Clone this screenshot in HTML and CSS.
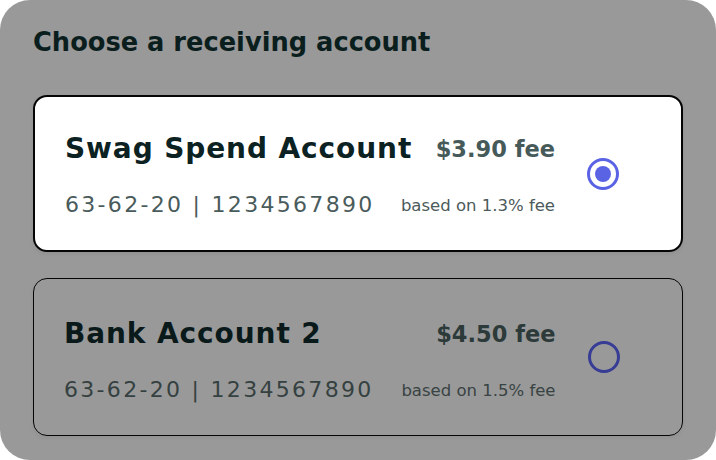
FILE: index.html
```html
<!DOCTYPE html>
<html lang="en">
<head>
<meta charset="utf-8">
<title>Choose a receiving account</title>
<link rel="stylesheet" href="styles.css">
</head>
<body>
<div class="panel">
  <h1 class="heading">Choose a receiving account</h1>
  <div class="cards">
    <label class="card card--selected">
      <span class="info">
        <span class="name">Swag Spend Account</span>
        <span class="numbers">63-62-20 | 1234567890</span>
      </span>
      <span class="pricing">
        <span class="fee">$3.90 fee</span>
        <span class="basis">based on 1.3% fee</span>
      </span>
      <span class="radio radio--on"><span class="dot"></span></span>
    </label>
    <label class="card card--dim">
      <span class="info">
        <span class="name">Bank Account 2</span>
        <span class="numbers">63-62-20 | 1234567890</span>
      </span>
      <span class="pricing">
        <span class="fee">$4.50 fee</span>
        <span class="basis">based on 1.5% fee</span>
      </span>
      <span class="radio"></span>
    </label>
  </div>
</div>
</body>
</html>
```
FILE: styles.css
```css
* { box-sizing: border-box; }
html, body { margin: 0; padding: 0; background: #ffffff; }
body { font-family: "DejaVu Sans", "Inter", sans-serif; }

.panel {
  width: 716px;
  height: 460px;
  background: #999999;
  border-radius: 30px;
  padding: 27px 33px 0 33px;
}

.heading {
  margin: 0;
  font-size: 25.7px;
  line-height: 30px;
  font-weight: 700;
  color: #0b1e1e;
}

.cards {
  margin-top: 38px;
  display: flex;
  flex-direction: column;
  gap: 26px;
}

.card {
  display: flex;
  align-items: flex-start;
  gap: 32px;
  padding: 35px 62px 31px 30px;
  border: 2px solid #050505;
  border-radius: 14px;
  box-shadow: 0 2px 4px rgba(0, 0, 0, 0.06);
}

.card--selected { background: #ffffff; }
.card--dim {
  padding-top: 38px;
  padding-right: 62.5px;
  border-width: 1.5px;
}

.info {
  flex: 1;
  min-width: 0;
  display: flex;
  flex-direction: column;
  gap: 25px;
}
.pricing {
  flex: none;
  display: flex;
  flex-direction: column;
  align-items: flex-end;
  gap: 33px;
  padding-top: 3px;
}

.name {
  font-size: 28px;
  line-height: 34px;
  font-weight: 700;
  letter-spacing: 0.9px;
  color: #0c2222;
  white-space: nowrap;
}
.numbers {
  font-size: 22px;
  line-height: 28px;
  letter-spacing: 2.3px;
  color: #4a5b5b;
  white-space: nowrap;
}
.fee {
  font-size: 22.5px;
  line-height: 28px;
  font-weight: 700;
  color: #475a5a;
  white-space: nowrap;
}
.basis {
  font-size: 16.5px;
  line-height: 20px;
  color: #4b5a5a;
  white-space: nowrap;
}

.radio {
  flex: none;
  align-self: center;
  width: 32px;
  height: 32px;
  margin-top: -4px;
  border: 3px solid #5a63e4;
  border-radius: 50%;
  display: flex;
  align-items: center;
  justify-content: center;
}
.dot {
  width: 16px;
  height: 16px;
  border-radius: 50%;
  background: #5a63e4;
}

.card--dim .radio { margin-top: -7px; border-color: #373c95; }
.card--dim .name { color: #0a1a1a; }
.card--dim .fee { color: #2d3a3a; }
.card--dim .numbers { color: #354141; }
.card--dim .basis { color: #384343; }
```
